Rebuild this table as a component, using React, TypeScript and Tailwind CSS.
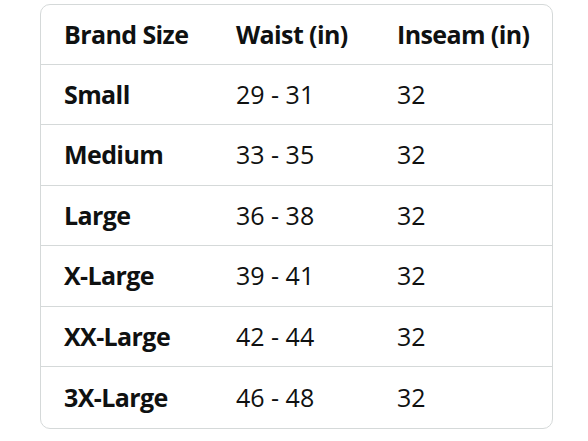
import React from "react";

const rows = [
  ["Small", "29 - 31", "32"],
  ["Medium", "33 - 35", "32"],
  ["Large", "36 - 38", "32"],
  ["X-Large", "39 - 41", "32"],
  ["XX-Large", "42 - 44", "32"],
  ["3X-Large", "46 - 48", "32"],
];

export default function App() {
  return (
    <div className="w-[588px] h-[441px] bg-white pl-[40px] pt-[4px]" style={{ fontFamily: '"Open Sans", "Noto Sans", sans-serif' }}>
      <div className="w-[513px] rounded-[10px] border border-[#d5d9d9] overflow-hidden text-[#0f1111] text-[25px]">
        <div className="grid grid-cols-[171px_161px_179px] h-[59.5px] items-center border-b border-[#d5d9d9] font-bold tracking-[-0.6px]">
          <div className="pl-[23px]">Brand Size</div>
          <div className="pl-6">Waist (in)</div>
          <div className="pl-6">Inseam (in)</div>
        </div>
        {rows.map((r, i) => (
          <div
            key={r[0]}
            className={
              i < rows.length - 1
                ? "grid grid-cols-[171px_161px_179px] h-[60.5px] items-center border-b border-[#d5d9d9]"
                : "grid grid-cols-[171px_161px_179px] h-[60.5px] items-center"
            }
          >
            <div className="pl-[23px] font-bold tracking-[-0.6px]">{r[0]}</div>
            <div className="pl-6">{r[1]}</div>
            <div className="pl-6">{r[2]}</div>
          </div>
        ))}
      </div>
    </div>
  );
}
